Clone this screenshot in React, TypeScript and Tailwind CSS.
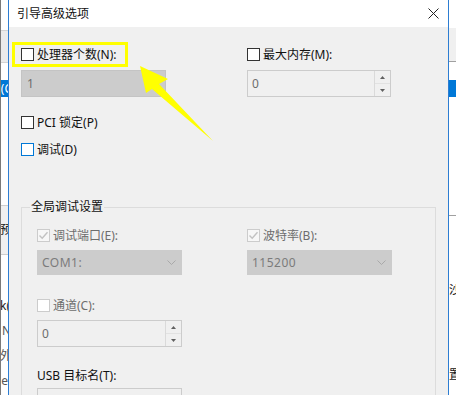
import React from "react";

type BoxKind = "normal" | "focus" | "disabledChecked" | "disabled";

function Box({ kind }: { kind: BoxKind }) {
  if (kind === "disabledChecked") {
    return (
      <div className="w-[13px] h-[13px] shrink-0 border border-[#cccccc] bg-[#f7f7f7] flex items-center justify-center">
        <svg width="11" height="11" viewBox="0 0 11 11">
          <path d="M1.5 5.5 L4.2 8.3 L9.5 2.2" fill="none" stroke="#c2c2c2" strokeWidth="1.4" />
        </svg>
      </div>
    );
  }
  if (kind === "disabled") {
    return <div className="w-[13px] h-[13px] shrink-0 border border-[#cccccc] bg-white" />;
  }
  if (kind === "focus") {
    return <div className="w-[13px] h-[13px] shrink-0 border border-[#0078d7] bg-white" />;
  }
  return <div className="w-[13px] h-[13px] shrink-0 border border-[#333333] bg-white" />;
}

function CheckRow({ kind, label, gray }: { kind: BoxKind; label: string; gray?: boolean }) {
  return (
    <div className="flex items-center h-[13px] gap-[3px]">
      <Box kind={kind} />
      <span className={gray ? "leading-none whitespace-nowrap text-[#6d6d6d]" : "leading-none whitespace-nowrap text-[#111111]"}>
        {label}
      </span>
    </div>
  );
}

function Spinner() {
  return (
    <div className="w-[16px] h-full flex flex-col border-l border-[#dadada] bg-[#f0f0f0]">
      <div className="flex-1 flex items-center justify-center border-b border-[#e2e2e2]">
        <svg width="5" height="3" viewBox="0 0 5 3">
          <path d="M0 3 L2.5 0 L5 3 Z" fill="#606060" />
        </svg>
      </div>
      <div className="flex-1 flex items-center justify-center">
        <svg width="5" height="3" viewBox="0 0 5 3">
          <path d="M0 0 L2.5 3 L5 0 Z" fill="#606060" />
        </svg>
      </div>
    </div>
  );
}

function SpinInput({ value, widthClass }: { value: string; widthClass: string }) {
  return (
    <div className={"h-[27px] border border-[#cccccc] bg-[#f0f0f0] flex " + widthClass}>
      <div className="flex-1 flex items-center pl-[4px] text-[#6d6d6d] leading-none">{value}</div>
      <Spinner />
    </div>
  );
}

function Select({ value }: { value: string }) {
  return (
    <div className="w-[145px] h-[25px] bg-[#cccccc] border border-[#cccccc] flex items-center justify-between pl-[4px] pr-[5px]">
      <span className="leading-none text-[#7b7b7b] tracking-[0.5px]">{value}</span>
      <svg width="9" height="5" viewBox="0 0 9 5">
        <path d="M0.5 0.5 L4.5 4.5 L8.5 0.5" fill="none" stroke="#a9a9a9" strokeWidth="1" />
      </svg>
    </div>
  );
}

function LeftStrip() {
  return (
    <div className="w-[8px] h-full flex flex-col border-l border-[#7a7a7a] bg-white overflow-hidden">
      <div className="h-[30px]" />
      <div className="h-[33px] bg-[#ebebeb] border-y border-[#d4d4d4]" />
      <div className="h-[17px]" />
      <div className="h-[17px] bg-[#0078d7] flex items-center justify-end">
        <span className="text-white leading-none whitespace-nowrap mr-[-4px]">(C</span>
      </div>
      <div className="h-[108px]" />
      <div className="h-[50px] bg-[#f0f0f0] border-y border-[#cfcfcf] flex items-center justify-end">
        <span className="text-[#111] leading-none whitespace-nowrap mr-[-4px]">预</span>
      </div>
      <div className="h-[38px]" />
      <div className="h-[25px] flex items-center justify-end">
        <span className="text-[#222] leading-none whitespace-nowrap mr-[-2px]">k(</span>
      </div>
      <div className="h-[25px] flex items-center justify-end">
        <span className="text-[#555] leading-none whitespace-nowrap mr-[-3px]">N</span>
      </div>
      <div className="h-[25px] flex items-center justify-end">
        <span className="text-[#555] leading-none whitespace-nowrap mr-[-4px]">外</span>
      </div>
      <div className="h-[25px] flex items-center justify-end">
        <span className="text-[#555] leading-none whitespace-nowrap mr-[0px]">e</span>
      </div>
    </div>
  );
}

function RightStrip() {
  return (
    <div className="w-[7px] h-full flex flex-col bg-white overflow-hidden">
      <div className="h-[28px]" />
      <div className="h-[33px] bg-[#f0f0f0]" />
      <div className="h-px bg-[#a0a0a0]" />
      <div className="h-[18px]" />
      <div className="h-[17px] bg-[#0078d7]" />
      <div className="h-[118px]" />
      <div className="h-px bg-[#a0a0a0]" />
      <div className="h-[66px]" />
      <div className="h-[16px] flex items-center">
        <span className="text-[#111] leading-none whitespace-nowrap">沙</span>
      </div>
      <div className="h-[69px]" />
      <div className="h-[16px] flex items-center">
        <span className="text-[#111] leading-none whitespace-nowrap">置</span>
      </div>
    </div>
  );
}

export default function App() {
  return (
    <div className="relative w-[456px] h-[395px] overflow-hidden flex bg-white font-['Noto_Sans','Noto_Sans_CJK_SC',sans-serif] text-[12px] text-[#111111]">
      <LeftStrip />
      <div className="w-px h-full bg-[#2d7dd2]" />
      <div className="w-[439px] h-full flex flex-col">
        <div className="h-[27px] shrink-0 bg-white flex items-center justify-between pl-[8px] pr-[9px]">
          <span className="leading-none">引导高级选项</span>
          <svg width="11" height="11" viewBox="0 0 11 11">
            <path d="M0.5 0.5 L10.5 10.5 M10.5 0.5 L0.5 10.5" stroke="#222" strokeWidth="1" />
          </svg>
        </div>
        <div className="flex-1 bg-[#f0f0f0] px-[12px] pt-[21px] overflow-hidden">
          <div className="flex">
            <div className="w-[226px]">
              <CheckRow kind="normal" label="处理器个数(N):" />
              <div className="mt-[9px] w-[145px] h-[27px] bg-[#cccccc] border border-[#c4c4c4] flex items-center pl-[5px] text-[#6d6d6d] leading-none">
                1
              </div>
            </div>
            <div>
              <CheckRow kind="normal" label="最大内存(M):" />
              <div className="mt-[9px]">
                <SpinInput value="0" widthClass="w-[144px]" />
              </div>
            </div>
          </div>
          <div className="mt-[19px]">
            <CheckRow kind="normal" label="PCI 锁定(P)" />
          </div>
          <div className="mt-[14px]">
            <CheckRow kind="focus" label="调试(D)" />
          </div>
          <fieldset className="mt-[43px] border border-[#dcdcdc] pb-[20px]">
            <legend className="ml-[8px] px-[1px] leading-[16px] text-[#111111]">全局调试设置</legend>
            <div className="pl-[15px]">
              <div className="flex mt-[14px]">
                <div className="w-[210px]">
                  <CheckRow kind="disabledChecked" label="调试端口(E):" gray />
                  <div className="mt-[8px]">
                    <Select value="COM1:" />
                  </div>
                </div>
                <div>
                  <CheckRow kind="disabledChecked" label="波特率(B):" gray />
                  <div className="mt-[8px]">
                    <Select value="115200" />
                  </div>
                </div>
              </div>
              <div className="mt-[24px]">
                <CheckRow kind="disabled" label="通道(C):" gray />
              </div>
              <div className="mt-[8px]">
                <SpinInput value="0" widthClass="w-[145px]" />
              </div>
              <div className="mt-[22px] h-[13px] flex items-center">
                <span className="leading-none text-[#111111]">USB 目标名(T):</span>
              </div>
              <div className="mt-[6px] w-[145px] h-[27px] border border-[#cccccc] bg-[#f0f0f0]" />
            </div>
          </fieldset>
        </div>
      </div>
      <div className="w-px h-full bg-[#2d7dd2]" />
      <RightStrip />

      <div className="absolute left-[12px] top-[42px] w-[116px] h-[25px] border-[3px] border-[#ffff00] pointer-events-none" />
      <svg className="absolute left-0 top-0 pointer-events-none" width="456" height="395" viewBox="0 0 456 395">
        <polygon points="140,66 168,79 159,84 213,141 152,89 146,93" fill="#ffff00" />
      </svg>
    </div>
  );
}
